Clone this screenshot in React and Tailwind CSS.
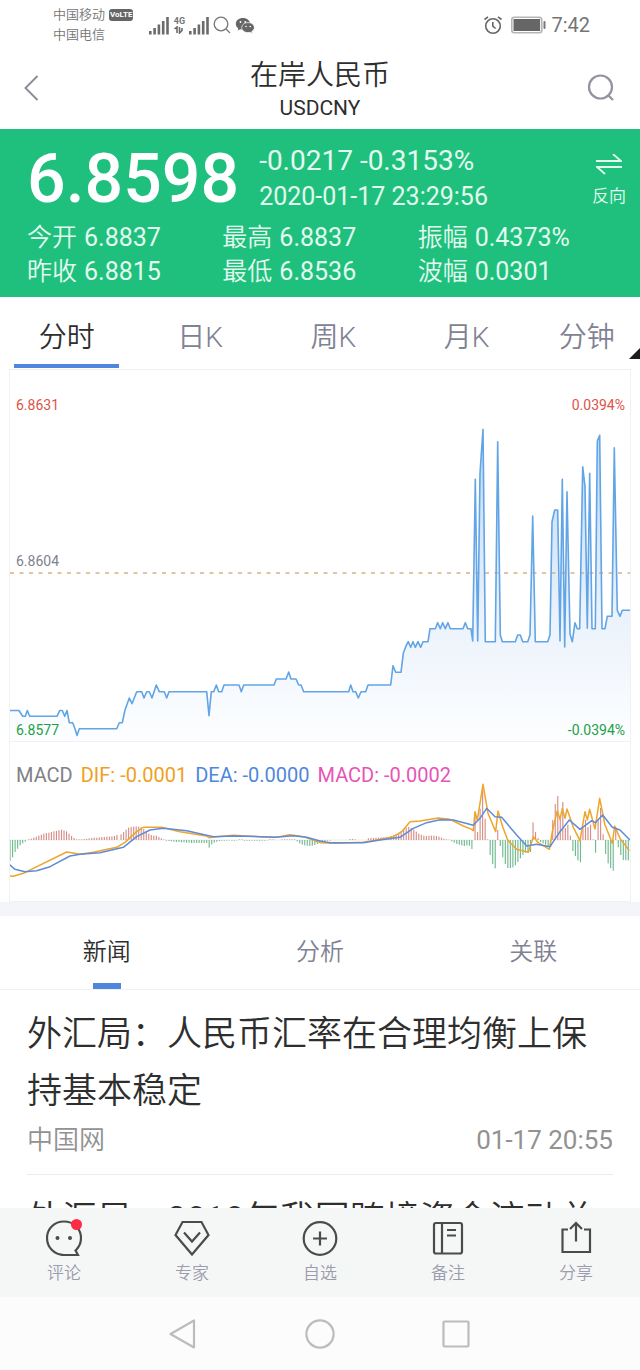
import { useState } from "react";

// --- Quote data ---
const stats = [
  { label: "今开", value: "6.8837" },
  { label: "最高", value: "6.8837" },
  { label: "振幅", value: "0.4373%" },
  { label: "昨收", value: "6.8815" },
  { label: "最低", value: "6.8536" },
  { label: "波幅", value: "0.0301" },
];

const periods = ["分时", "日K", "周K", "月K", "分钟"];
const newsTabs = ["新闻", "分析", "关联"];

const news = [
  {
    title: "外汇局：人民币汇率在合理均衡上保持基本稳定",
    source: "中国网",
    time: "01-17 20:55",
  },
  { title: "外汇局：2019年我国跨境资金流动总" },
];

const pricePoints =
  "10,710.5 19,710.5 22.7,716.3 25.3,716.3 27.3,710.5 29.7,716.3 57,716.3 59.7,710.5 62.3,710.5 64.7,716.3 67,710.5 69.3,722.7 72.7,722.7 75,728.7 77,735.5 79.3,728.7 116.7,728.7 119.3,722.7 122.3,722.7 125,710 129.3,698 132,703.7 136.7,691.7 141.7,691.7 144,698 146.7,691.7 149.3,691.7 152,698 156.3,685 159.3,691.7 164.3,691.7 166.7,698 169,691.7 206.7,691.7 209,715.7 211.3,691.7 213.7,691.7 216.3,685 218.7,691.7 221.7,691.7 224,685 239,685 241.3,691.7 243.7,685 274,685 276.3,679 286,679 288.7,672 291,679 296,679 298.7,685 301,685 303.7,691.7 348.7,691.7 350.7,685 353,691.7 355.7,691.7 358.3,698 361,691.7 365.7,691.7 368,685 390.7,685 393,665.7 395.7,672.3 401,672.3 403.3,653.3 406,646 408.3,641.7 410.7,647.3 413,641.7 415.3,647.3 418,641.7 420.7,647.3 423,641.7 428,641.7 430,628.7 435.3,628.7 437.7,622.7 440.3,628.7 442.7,622.7 445.3,628.7 448,622.7 450.3,628.7 463,628.7 465.3,622.7 467.7,628.7 471,628.7 472.7,641 475.3,479.3 477.7,641 480,473.3 483,429.3 485.3,641.7 495.3,641.7 497.7,441.7 500.3,635 502.3,641.7 515.3,641.7 517.7,635 520.3,635 522.7,641.7 527.7,641.7 530,635 532.7,516 535.3,641.7 547.7,641.7 550,635 552,521.7 554.7,510 557.7,510 560,641 562.3,479.3 564.7,647 567,491.7 570,634 572.3,641.7 575,622.7 577.3,628.7 579.7,628.7 582.7,466.7 585,486.7 587.3,628.3 589.7,473.3 592,628.7 595.3,628.7 597.3,441 599.7,435.3 602,628.7 605,628.7 607.3,616.3 612,616.3 614.3,447.7 617.3,610.3 620,616.3 622.3,610.3 630,610.3";

// MACD histogram, runs of [first x, heights], one bar every 7.56 units
const macdBars = [
  [30, [-63, -52, -36, -26, -16, -10, -5]],
  [86, [2, 4, 7, 10, 13, 16, 19, 21, 22, 24, 26, 27, 29, 31, 29, 26, 19, 12, 6, 2, 2, 2, 3, 4, 5, 6, 7, 7, 8, 9, 9, 10, 10, 11, 12, 15]],
  [363, [17, 24, 31, 37, 39, 40, 41, 40, 38, 33, 26, 19, 15, 13, 13, 9, 5, 2, -2, -3]],
  [514, [-4, -5, -6, -6, -7, -7, -8, -8, -9, -9, -9, -9, -9, -9, -9, -23, -13, -8, -5, -3, -2, -2, -2, -1, -2, -2, -1, 2, 2, -2, -2, -2, -2, -2, -2, -2, -2, -2, -1, 2, 2, 1]],
  [846, [2, 2, 2, 2, 2, 2, -4, -10, -14, -16, -17, -18, -17, -15, -12, -8, -5, -3, -2, -2]],
  [1050, [3, 3, 2]],
  [1105, [5, 6, 6, 7, 7, 8, 8, 8, 9, 12, 15, 18, 20, 26, 33, 37, 39, 36, 31, 25, 19, 16, 13, 12, 13, 13, 13, 12, 10, 7, 4, 2, 1]],
  [1355, [-4, -8, -12, -14, -16, -18, -16, -17, -27]],
  [1425, [75, 24, 94, 150, 64, 2, -45, -72, -85, 30, -18, -52, -72, -84, -84, -82, -76, -66, -55, -45, -38, -36, -36, 53, 24, 6, -6, -10, -14, -18, -20]],
  [1658, [60, 108, 132, 62, 114, 36, 46, 13, -33, -48, -61, -67, 36, 60, 39, 46, 2, -38, 60, 96, 17, -42, -70, -84, -92, 38, -22, -45, -60, -61, -61, -60]],
];

const difPoints =
  "30,408 40,409 70,400 100,385 200,336 215,338 240,343 280,337 350,322 375,307 410,275 430,262 485,262 540,275 620,288 627,293 650,290 700,286 780,290 830,292 870,284 910,290 960,308 1010,310 1090,307 1130,300 1180,290 1205,275 1230,245 1260,243 1315,234 1350,238 1390,258 1415,268 1420,272 1425,215 1432,240 1449,133 1464,220 1487,275 1494,213 1508,260 1523,300 1550,328 1585,337 1600,290 1615,308 1648,328 1658,270 1672,212 1680,238 1687,205 1695,235 1701,207 1720,262 1740,302 1755,215 1762,240 1769,208 1785,267 1799,175 1815,255 1837,310 1844,258 1860,295 1888,332";

const deaPoints =
  "28,373 45,388 75,395 110,392 150,380 210,348 240,343 300,338 370,322 410,290 450,270 490,265 560,272 640,290 700,288 780,290 825,292 880,287 920,292 960,303 990,308 1090,308 1140,300 1200,292 1240,265 1280,248 1320,239 1360,240 1420,256 1440,235 1460,205 1485,230 1505,232 1550,285 1580,318 1610,313 1650,320 1680,275 1708,240 1740,268 1775,242 1786,248 1808,225 1837,262 1860,270 1890,300";

function Signal() {
  return (
    <svg viewBox="0 0 20 19" className="h-[19px] w-5" fill="#6b6b6b">
      <rect x="0" y="15" width="2.6" height="3.5" />
      <rect x="4.3" y="12" width="2.6" height="6.5" />
      <rect x="8.6" y="8.5" width="2.6" height="10" />
      <rect x="12.9" y="5" width="2.6" height="13.5" />
      <rect x="17.2" y="1" width="2.6" height="17.5" />
    </svg>
  );
}

function StatusBar() {
  return (
    <div className="flex h-[50px] shrink-0 items-center justify-between pr-[50px] pl-[53px] text-[#757575]">
      <div className="flex items-center">
        <div className="text-[13px] leading-5 font-[350]">
          <div className="flex items-center gap-1">
            中国移动
            <span className="flex h-3 items-center rounded-[3px] bg-[#666] px-px text-[8px] font-bold text-white">
              VoLTE
            </span>
          </div>
          <div>中国电信</div>
        </div>
        <div className="ml-4 flex items-center">
          <Signal />
          <div className="mx-1 flex w-3 flex-col items-center">
            <span className="text-[9px] leading-[10px] font-bold">4G</span>
            <svg viewBox="0 0 10 8" className="h-2 w-[10px]" fill="none" stroke="#6b6b6b" strokeWidth="1.6">
              <path d="M0.5 3L3 1v6M5.5 1v6l2.5-2.5M8 2v3" />
            </svg>
          </div>
          <Signal />
          <svg viewBox="0 0 18 18" className="ml-1 h-[18px] w-[18px]" fill="none" stroke="#777" strokeWidth="1.3">
            <circle cx="8" cy="8" r="6.8" />
            <path d="M13 13l4 4" />
          </svg>
          <svg viewBox="0 0 20 17" className="ml-1 h-[17px] w-5">
            <path d="M8 1C3.8 1 .8 3.6.8 6.9c0 1.8.9 3.4 2.5 4.5L2.6 13.6l2.6-1.3c.9.3 1.8.4 2.8.4 4 0 7.2-2.6 7.2-5.800S12 1 8 1z" fill="#666" />
            <path d="M13 5.600c-3.600 0-6.300 2.200-6.300 5s2.700 5 6.300 5c.8 0 1.500-.1 2.200-.3l2.200 1.100-.6-1.900c1.500-.9 2.500-2.300 2.500-3.900 0-2.800-2.700-5-6.300-5z" fill="#666" stroke="#fff" strokeWidth="0.7" />
            <g fill="#fff">
              <circle cx="5.5" cy="5" r="0.9" />
              <circle cx="10.3" cy="5" r="0.9" />
              <circle cx="11" cy="9.5" r="0.8" />
              <circle cx="15.2" cy="9.5" r="0.8" />
            </g>
          </svg>
        </div>
      </div>
      <div className="flex items-center">
        <svg viewBox="0 0 20 20" className="h-5 w-5" fill="none" stroke="#666" strokeWidth="1.6">
          <circle cx="10" cy="11" r="7.3" />
          <path d="M9.8 7v4.2l2.8 2.3M1.5 4.5L5 1.8M18.5 4.5L15 1.8" />
        </svg>
        <svg viewBox="0 0 36 18" className="ml-2 h-[18px] w-9">
          <rect x="0.8" y="1.2" width="30" height="15.6" rx="2.5" fill="#fff" stroke="#b5b5b5" strokeWidth="1.6" />
          <rect x="2.5" y="3" width="26.6" height="12" fill="#666" />
          <rect x="32.5" y="5" width="2" height="8" rx="1" fill="#777" />
        </svg>
        <span className="ml-1 text-xl">7:42</span>
      </div>
    </div>
  );
}

function Header() {
  return (
    <header className="flex h-[79px] shrink-0 items-center justify-between px-6 pb-[3px]">
      <button aria-label="返回" className="flex w-8 items-center">
        <svg viewBox="0 0 15 26" className="h-[26px] w-[15px]" fill="none" stroke="#8d8d9c" strokeWidth="2">
          <path d="M13.5 1L1.5 13l12 12" />
        </svg>
      </button>
      <div className="flex flex-col items-center pt-1 text-[#2e2e2e]">
        <h1 className="text-[28px] leading-9 font-[350]">在岸人民币</h1>
        <span className="text-[21px] leading-7">USDCNY</span>
      </div>
      <button aria-label="搜索" className="flex w-8 justify-end">
        <svg viewBox="0 0 30 30" className="h-[30px] w-[30px]" fill="none" stroke="#9292a3" strokeWidth="2.2">
          <circle cx="14.5" cy="14" r="11.5" />
          <path d="M22.5 22.5l4.5 4.5" />
        </svg>
      </button>
    </header>
  );
}

function Quote() {
  return (
    <section className="shrink-0 bg-[#1fc07d] pt-[14px] pb-2 pl-[27px] text-[#e3faef]">
      <div className="flex items-center">
        <span className="text-[68px] leading-[68px] font-medium text-white">6.8598</span>
        <div className="ml-5 flex-1">
          <div className="text-[28px] leading-9">-0.0217 -0.3153%</div>
          <div className="text-[25px] leading-9">2020-01-17 23:29:56</div>
        </div>
        <button className="mr-3.5 flex flex-col items-center gap-2 pt-1">
          <svg viewBox="0 0 26 22" className="h-[22px] w-[26px]" fill="none" stroke="#e3faef" strokeWidth="1.8">
            <path d="M0 7h25l-8-7M26 13H1l8 7" />
          </svg>
          <span className="text-[17px] leading-6 font-[350]">反向</span>
        </button>
      </div>
      <dl className="mt-1.5 mr-[27px] grid grid-cols-3">
        {stats.map((item) => (
          <div key={item.label} className="flex gap-[7px] text-[25px] leading-[34px] whitespace-nowrap">
            <dt className="font-[350]">{item.label}</dt>
            <dd>{item.value}</dd>
          </div>
        ))}
      </dl>
    </section>
  );
}

function PeriodTabs() {
  const [active, setActive] = useState("分时");

  return (
    <nav className="relative grid h-[72px] shrink-0 grid-cols-[5fr_5fr_5fr_5fr_4fr] text-[28px]">
      {periods.map((p) => (
        <button
          key={p}
          onClick={() => setActive(p)}
          className={`flex flex-col items-center justify-between pt-5 pb-px leading-[42px] font-[350] ${
            active === p ? "text-[#2e2e2e]" : "text-[#7f8294]"
          }`}
        >
          {p}
          <span className={`h-1 w-[105px] ${active === p ? "bg-[#4f87dc]" : ""}`} />
        </button>
      ))}
      <svg viewBox="0 0 11 11" className="absolute right-0 bottom-[10px] h-[11px] w-[11px]" fill="#1c1c1c">
        <path d="M11 0v11H0z" />
      </svg>
    </nav>
  );
}

function PriceChart() {
  return (
    <div className="relative text-[14px] leading-4">
      <svg viewBox="10 370 620 371" preserveAspectRatio="none" className="block h-[371px] w-full">
        <defs>
          <linearGradient id="area" x1="0" y1="430" x2="0" y2="741" gradientUnits="userSpaceOnUse">
            <stop offset="0" stopColor="#bcd8f6" />
            <stop offset="0.6" stopColor="#ebf2fb" />
            <stop offset="1" stopColor="#fdfeff" />
          </linearGradient>
        </defs>
        <polygon points={`10,741 ${pricePoints} 630,741`} fill="url(#area)" />
        <line x1="10" x2="630" y1="573" y2="573" stroke="#d9b184" strokeWidth="1.5" strokeDasharray="4 5.5" />
        <polyline points={pricePoints} fill="none" stroke="#62a5e6" strokeWidth="1.6" strokeLinejoin="round" />
      </svg>
      <span className="absolute top-[27px] left-1.5 text-[#de5347]">6.8631</span>
      <span className="absolute top-[27px] right-[5px] text-[#de5347]">0.0394%</span>
      <span className="absolute top-[183px] left-1.5 text-[#7f8290]">6.8604</span>
      <span className="absolute bottom-[3px] left-1.5 text-[#23a047]">6.8577</span>
      <span className="absolute right-[5px] bottom-[3px] text-[#23a047]">-0.0394%</span>
    </div>
  );
}

function MacdChart() {
  return (
    <div className="relative border-t border-[#f0f1f4]">
      <svg viewBox="30 6 1860 477" preserveAspectRatio="none" className="block h-[159px] w-full">
        <line x1="30" x2="1890" y1="300" y2="300" stroke="#dfe3e3" strokeWidth="2" />
        {macdBars.map(([start, heights]) =>
          heights.map((h, i) => (
            <rect
              key={`${start}-${i}`}
              x={start + i * 7.56 - 1.5}
              y={h > 0 ? 300 - h : 300}
              width="3.4"
              height={Math.abs(h)}
              fill={h > 0 ? "#d68d86" : "#6fb98e"}
            />
          ))
        )}
        <polyline points={difPoints} fill="none" stroke="#eda52c" strokeWidth="4.5" strokeLinejoin="round" />
        <polyline points={deaPoints} fill="none" stroke="#5f8bd8" strokeWidth="4.5" strokeLinejoin="round" />
      </svg>
      <div className="absolute top-[21px] left-1.5 flex gap-2 text-xl leading-6">
        <span className="text-[#808087]">MACD</span>
        <span className="text-[#f0a01e]">DIF: -0.0001</span>
        <span className="text-[#4f87dc]">DEA: -0.0000</span>
        <span className="text-[#e754b6]">MACD: -0.0002</span>
      </div>
    </div>
  );
}

function News() {
  const [active, setActive] = useState("新闻");

  return (
    <section>
      <nav className="flex h-[74px] border-b border-[#f0f1f4] text-2xl">
        {newsTabs.map((t) => (
          <button
            key={t}
            onClick={() => setActive(t)}
            className={`flex flex-1 flex-col items-center justify-between pt-[18px] leading-9 font-[350] ${
              active === t ? "text-[#2e2e2e]" : "text-[#7f8294]"
            }`}
          >
            {t}
            <span className={`h-1.5 w-7 ${active === t ? "bg-[#4f87dc]" : ""}`} />
          </button>
        ))}
      </nav>
      {news.map((n) => (
        <article key={n.title} className="mx-[27px] border-b border-[#ececee] pt-4 pb-3.5">
          <h2 className="text-[35px] leading-[57px] font-[350] text-[#2e2e2e]">{n.title}</h2>
          {n.source && (
            <p className="flex justify-between text-[26px] leading-10 text-[#929292]">
              <span className="font-[350]">{n.source}</span>
              <time>{n.time}</time>
            </p>
          )}
        </article>
      ))}
    </section>
  );
}

const actions = [
  {
    label: "评论",
    dot: true,
    icon: (
      <>
        <path d="M30.5 29.500c2.800-3 4.500-7 4.500-11.500C35 8.500 27.500 1.500 18 1.500S1 8.500 1 18s7.500 17 17 17h14l-2.500-4.500z" />
        <circle cx="11.5" cy="18" r="2" fill="#4b4b4b" stroke="none" />
        <circle cx="24" cy="18" r="2" fill="#4b4b4b" stroke="none" />
      </>
    ),
  },
  {
    label: "专家",
    icon: <path d="M8.500 2h19L34.500 15 18 34.500 1.500 15zM10 12.500l8 9 8-9" />,
  },
  {
    label: "自选",
    icon: (
      <>
        <circle cx="18" cy="18.5" r="16.3" />
        <path d="M18 11.500v14M11 18.500h14" />
      </>
    ),
  },
  {
    label: "备注",
    icon: (
      <>
        <rect x="4" y="3" width="28" height="30.5" rx="2" />
        <path d="M12 3v30.500M17 10h9M17 15.500h9" />
      </>
    ),
  },
  {
    label: "分享",
    icon: <path d="M10 9.500H4.500v22.500h27.500V9.500H26M18 21.500V3M12 9l6-6 6 6" />,
  },
];

function ActionBar() {
  return (
    <nav className="flex h-[89px] shrink-0 bg-[#f5f7f7]">
      {actions.map((a) => (
        <button
          key={a.label}
          className="flex flex-1 flex-col items-center pt-3 text-[17px] leading-6 font-[350] text-[#9b9cac]"
        >
          <span className="relative mb-[5px]">
            <svg viewBox="0 0 36 36" className="h-9 w-9" fill="none" stroke="#4b4b4b" strokeWidth="2.2">
              {a.icon}
            </svg>
            {a.dot && <i className="absolute -top-px right-0 h-[11px] w-[11px] rounded-full bg-[#fb2c44]" />}
          </span>
          {a.label}
        </button>
      ))}
    </nav>
  );
}

function SystemNav() {
  return (
    <div className="flex h-[73px] shrink-0 items-center justify-center gap-[106px] bg-[#fcfcfc]">
      <button aria-label="后退">
        <svg viewBox="0 0 30 30" className="block h-[30px] w-[30px]" fill="none" stroke="#bcbcbc" strokeWidth="2.2" strokeLinejoin="round">
          <path d="M25 1.500v27L1.500 15z" />
        </svg>
      </button>
      <button aria-label="主页">
        <svg viewBox="0 0 30 30" className="block h-[30px] w-[30px]" fill="none" stroke="#bcbcbc" strokeWidth="2.2">
          <circle cx="15" cy="15" r="13.6" />
        </svg>
      </button>
      <button aria-label="最近任务">
        <svg viewBox="0 0 30 30" className="block h-[30px] w-[30px]" fill="none" stroke="#bcbcbc" strokeWidth="2.2">
          <rect x="2.5" y="2.5" width="25" height="25" rx="1" />
        </svg>
      </button>
    </div>
  );
}

export default function App() {
  return (
    <div className="flex h-screen flex-col overflow-hidden bg-white font-['Roboto','Noto_Sans_CJK_SC',sans-serif]">
      <StatusBar />
      <Header />
      <Quote />
      <main className="min-h-0 flex-1 overflow-hidden">
        <PeriodTabs />
        <div className="mx-[9px] border border-[#f0f1f4]">
          <PriceChart />
          <MacdChart />
        </div>
        <div className="h-[14px] bg-[#f4f5f9]" />
        <News />
      </main>
      <ActionBar />
      <SystemNav />
    </div>
  );
}
